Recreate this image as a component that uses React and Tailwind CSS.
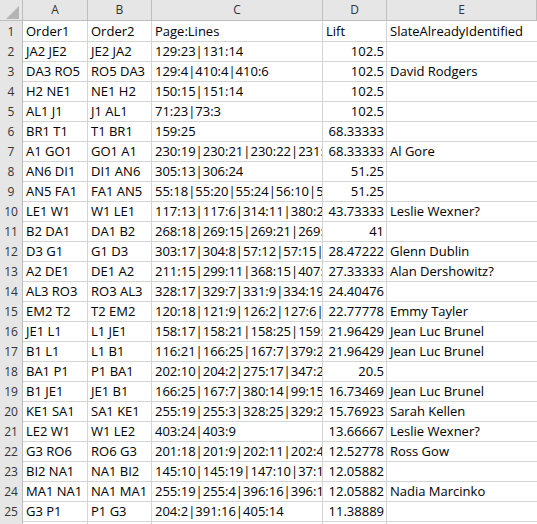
const columns = ['A', 'B', 'C', 'D', 'E']

const rows = [
  ['Order1', 'Order2', 'Page:Lines', 'Lift', 'SlateAlreadyIdentified'],
  ['JA2 JE2', 'JE2 JA2', '129:23|131:14', '102.5', ''],
  ['DA3 RO5', 'RO5 DA3', '129:4|410:4|410:6', '102.5', 'David Rodgers'],
  ['H2 NE1', 'NE1 H2', '150:15|151:14', '102.5', ''],
  ['AL1 J1', 'J1 AL1', '71:23|73:3', '102.5', ''],
  ['BR1 T1', 'T1 BR1', '159:25', '68.33333', ''],
  ['A1 GO1', 'GO1 A1', '230:19|230:21|230:22|231:22', '68.33333', 'Al Gore'],
  ['AN6 DI1', 'DI1 AN6', '305:13|306:24', '51.25', ''],
  ['AN5 FA1', 'FA1 AN5', '55:18|55:20|55:24|56:10|56:18', '51.25', ''],
  ['LE1 W1', 'W1 LE1', '117:13|117:6|314:11|380:22', '43.73333', 'Leslie Wexner?'],
  ['B2 DA1', 'DA1 B2', '268:18|269:15|269:21|269:24', '41', ''],
  ['D3 G1', 'G1 D3', '303:17|304:8|57:12|57:15|63:2', '28.47222', 'Glenn Dublin'],
  ['A2 DE1', 'DE1 A2', '211:15|299:11|368:15|407:8', '27.33333', 'Alan Dershowitz?'],
  ['AL3 RO3', 'RO3 AL3', '328:17|329:7|331:9|334:19', '24.40476', ''],
  ['EM2 T2', 'T2 EM2', '120:18|121:9|126:2|127:6|128:1', '22.77778', 'Emmy Tayler'],
  ['JE1 L1', 'L1 JE1', '158:17|158:21|158:25|159:14', '21.96429', 'Jean Luc Brunel'],
  ['B1 L1', 'L1 B1', '116:21|166:25|167:7|379:22', '21.96429', 'Jean Luc Brunel'],
  ['BA1 P1', 'P1 BA1', '202:10|204:2|275:17|347:24', '20.5', ''],
  ['B1 JE1', 'JE1 B1', '166:25|167:7|380:14|99:15', '16.73469', 'Jean Luc Brunel'],
  ['KE1 SA1', 'SA1 KE1', '255:19|255:3|328:25|329:2|330:1', '15.76923', 'Sarah Kellen'],
  ['LE2 W1', 'W1 LE2', '403:24|403:9', '13.66667', 'Leslie Wexner?'],
  ['G3 RO6', 'RO6 G3', '201:18|201:9|202:11|202:4|203:1', '12.52778', 'Ross Gow'],
  ['BI2 NA1', 'NA1 BI2', '145:10|145:19|147:10|37:16', '12.05882', ''],
  ['MA1 NA1', 'NA1 MA1', '255:19|255:4|396:16|396:18', '12.05882', 'Nadia Marcinko'],
  ['G3 P1', 'P1 G3', '204:2|391:16|405:14', '11.38889', ''],
  ['', '', '', '', ''],
]

const gridCols = 'grid grid-cols-[23px_65px_64px_171px_64px_150px]'

export default function App() {
  return (
    <div className="w-[537px] h-[524px] overflow-hidden bg-white font-['Open_Sans',sans-serif] text-[13px] text-black">
      <div className={`${gridCols} h-[21px] bg-[#e6e6e6]`}>
        <div className="relative border-r border-b border-[#bdbdbd]">
          <svg className="absolute left-[6px] top-[6px]" width="13" height="13" viewBox="0 0 13 13">
            <polygon points="13,0 13,13 0,13" fill="#b4b4b4" />
          </svg>
        </div>
        {columns.map((c) => (
          <div
            key={c}
            className="border-r border-b border-[#bdbdbd] text-center text-[12px] leading-[20px] text-[#333]"
          >
            {c}
          </div>
        ))}
      </div>

      {rows.map((row, i) => (
        <div key={i} className={`${gridCols} h-5`}>
          <div className="bg-[#e6e6e6] border-r border-b border-r-[#bdbdbd] border-b-[#d0d0d0] text-center text-[12px] leading-[19px] pt-[1px] text-[#333]">
            {i + 1}
          </div>
          {row.map((cell, j) => (
            <div
              key={j}
              className={`overflow-hidden whitespace-nowrap border-b border-[#d4d4d4] leading-[18px] pt-[1px] ${
                j < 4 ? 'border-r' : ''
              } ${j === 3 && i > 0 ? 'text-right pr-[2px]' : 'pl-[3px]'}`}
            >
              {cell}
            </div>
          ))}
        </div>
      ))}
    </div>
  )
}
